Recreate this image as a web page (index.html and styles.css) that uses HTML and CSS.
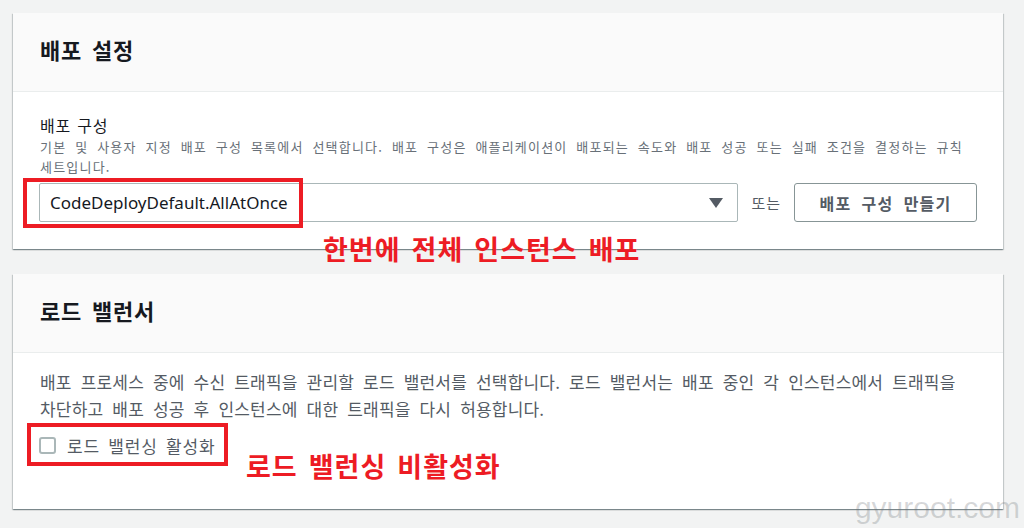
FILE: index.html
```html
<!DOCTYPE html>
<html lang="ko">
<head>
<meta charset="utf-8">
<title>배포 설정</title>
<link rel="stylesheet" href="styles.css">
</head>
<body>
<main class="page">
  <section class="card card-deploy">
    <header class="card-head"><h2>배포 설정</h2></header>
    <div class="card-body">
      <div class="field-label">배포 구성</div>
      <div class="field-desc">기본 및 사용자 지정 배포 구성 목록에서 선택합니다. 배포 구성은 애플리케이션이 배포되는 속도와 배포 성공 또는 실패 조건을 결정하는 규칙 세트입니다.</div>
      <div class="field-row">
        <div class="select">
          <span class="select-value">CodeDeployDefault.AllAtOnce</span>
          <svg class="caret" width="14" height="10" viewBox="0 0 14 10"><polygon points="0,0 14,0 7,10" fill="#545b64"/></svg>
        </div>
        <span class="or">또는</span>
        <button class="btn">배포 구성 만들기</button>
      </div>
    </div>
    <div class="mark mark-select"></div>
    <div class="note note-deploy">한번에 전체 인스턴스 배포</div>
  </section>

  <section class="card card-lb">
    <header class="card-head"><h2>로드 밸런서</h2></header>
    <div class="card-body lb-body">
      <p class="lb-text">배포 프로세스 중에 수신 트래픽을 관리할 로드 밸런서를 선택합니다. 로드 밸런서는 배포 중인 각 인스턴스에서 트래픽을 차단하고 배포 성공 후 인스턴스에 대한 트래픽을 다시 허용합니다.</p>
      <label class="check">
        <span class="box"></span>
        <span class="check-label">로드 밸런싱 활성화</span>
      </label>
    </div>
    <div class="mark mark-check"></div>
    <div class="note note-lb">로드 밸런싱 비활성화</div>
  </section>
</main>
<div class="watermark">gyuroot.com</div>
</body>
</html>
```

FILE: styles.css
```css
* { box-sizing: border-box; }
html, body { margin: 0; padding: 0; }
body {
  background: #f2f3f3;
  font-family: "Noto Sans", "Noto Sans CJK KR", sans-serif;
  color: #16191f;
  width: 1024px;
  height: 528px;
  overflow: hidden;
  position: relative;
}
.page {
  display: flex;
  flex-direction: column;
  gap: 25px;
  padding: 13px 21px 0 13px;
}
.card {
  position: relative;
  background: #fff;
  box-shadow: 0 1px 1px 0 rgba(0,28,36,.3), 1px 1px 1px 0 rgba(0,28,36,.15), -1px 1px 1px 0 rgba(0,28,36,.15);
}
.card-head {
  background: #fafafa;
  border-bottom: 1px solid #eaeded;
  height: 79px;
  display: flex;
  align-items: center;
  padding: 0 27px 7px;
}
.card-head h2 {
  margin: 0;
  font-family: "Noto Sans CJK KR", sans-serif;
  font-size: 22px;
  font-weight: 700;
  word-spacing: 3px;
  letter-spacing: 0.8px;
  line-height: 26px;
}
.card-body {
  padding: 21px 26px 27px 27px;
}
.field-label {
  font-family: "Noto Sans CJK KR", sans-serif;
  font-size: 16px;
  line-height: 24px;
  word-spacing: 1px;
  letter-spacing: 0.8px;
}
.field-desc {
  font-family: "Noto Sans CJK KR", sans-serif;
  font-size: 13px;
  line-height: 20px;
  color: #687078;
  letter-spacing: 1.2px;
  word-spacing: 4px;
}
.field-row {
  margin-top: 6px;
  display: flex;
  align-items: center;
  margin-left: -1px;
}
.select {
  flex: 1;
  height: 39px;
  border: 1px solid #aab7b8;
  border-radius: 2px;
  display: flex;
  align-items: center;
  justify-content: space-between;
  padding: 0 14px 0 10px;
  font-size: 17px;
}
.select-value { color: #16191f; }
.or {
  margin: 0 13px 0 13px;
  font-family: "Noto Sans CJK KR", sans-serif;
  font-size: 15px;
  color: #545b64;
  letter-spacing: 1px;
}
.btn {
  width: 183px;
  height: 39px;
  background: #fff;
  border: 1px solid #879596;
  border-radius: 3px;
  font-family: "Noto Sans CJK KR", sans-serif;
  font-size: 16px;
  font-weight: 700;
  color: #545b64;
  letter-spacing: 1.2px;
  word-spacing: 4.5px;
  padding: 0;
}
.lb-body { padding: 15px 26px 52px 27px; }
.lb-text {
  margin: 0;
  font-family: "Noto Sans CJK KR", sans-serif;
  font-size: 17px;
  line-height: 27px;
  color: #545b64;
  letter-spacing: 0.2px;
  word-spacing: 4px;
}
.check {
  margin-top: 11px;
  display: flex;
  align-items: center;
  gap: 11px;
  height: 24px;
  margin-left: -1px;
}
.box {
  width: 17px;
  height: 17px;
  border: 2px solid #aab7b8;
  border-radius: 3px;
  background: #fff;
}
.check-label {
  font-family: "Noto Sans CJK KR", sans-serif;
  font-size: 17px;
  color: #545b64;
  letter-spacing: 0.9px;
  word-spacing: 2.5px;
}
.mark {
  position: absolute;
  border: 4px solid #ed1c24;
}
.mark-select { left: 10px; top: 165px; width: 280px; height: 50px; }
.mark-check { left: 14px; top: 149px; width: 201px; height: 43px; }
.note {
  position: absolute;
  font-family: "Noto Sans CJK KR", sans-serif;
  font-size: 27px;
  font-weight: 700;
  line-height: 32px;
  color: #ed1c24;
  letter-spacing: 1px;
  word-spacing: 2.5px;
  white-space: nowrap;
}
.note-deploy { left: 310px; top: 220px; }
.note-lb { left: 233px; top: 176px; }
.watermark {
  position: absolute;
  right: 4px;
  top: 490px;
  font-family: "Liberation Sans", Arial, sans-serif;
  font-size: 30px;
  line-height: 36px;
  color: rgba(110,115,120,0.28);
}
```
